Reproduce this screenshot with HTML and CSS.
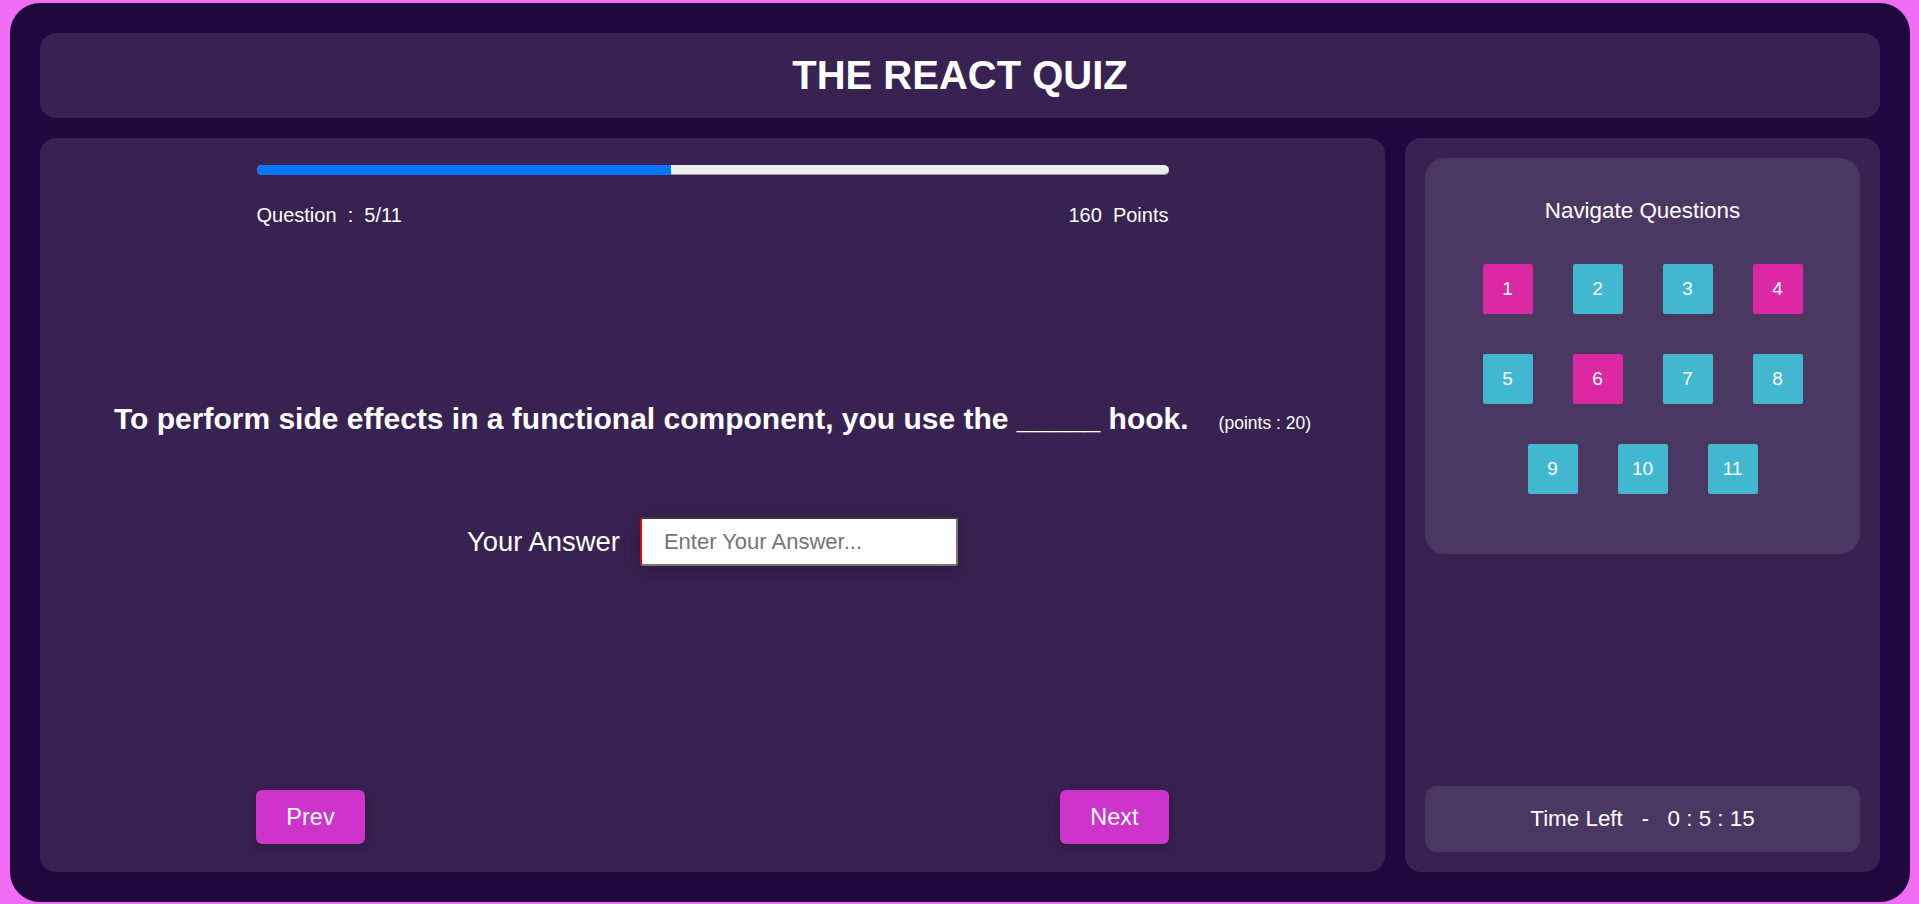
FILE: index.html
```html
<!DOCTYPE html>
<html lang="en">
<head>
<meta charset="utf-8">
<title>The React Quiz</title>
<link rel="stylesheet" href="styles.css">
</head>
<body>
<div class="app">
  <header class="header">
    <h1 class="title">THE REACT QUIZ</h1>
  </header>
  <div class="content">
    <main class="main">
      <div class="progress"><div class="progress-value" style="width: 45.45%"></div></div>
      <div class="info">
        <span>Question &nbsp;:&nbsp; 5/11</span>
        <span>160 &nbsp;Points</span>
      </div>
      <h2 class="question">To perform side effects in a functional component, you use the _____ hook.<span class="qpoints">(points : 20)</span></h2>
      <div class="answer">
        <label class="answer-label" for="ans">Your Answer</label>
        <input class="answer-input" id="ans" type="text" placeholder="Enter Your Answer...">
      </div>
      <div class="footer">
        <button class="btn">Prev</button>
        <button class="btn">Next</button>
      </div>
    </main>
    <aside class="sidebar">
      <div class="nav-box">
        <div class="nav-title">Navigate Questions</div>
        <div class="nav-grid">
          <button class="qbtn answered">1</button>
          <button class="qbtn">2</button>
          <button class="qbtn">3</button>
          <button class="qbtn answered">4</button>
          <button class="qbtn">5</button>
          <button class="qbtn answered">6</button>
          <button class="qbtn">7</button>
          <button class="qbtn">8</button>
          <button class="qbtn">9</button>
          <button class="qbtn">10</button>
          <button class="qbtn">11</button>
        </div>
      </div>
      <div class="timer">Time Left &nbsp; - &nbsp; 0 : 5 : 15</div>
    </aside>
  </div>
</div>
</body>
</html>
```
FILE: styles.css
```css
* { box-sizing: border-box; }

html, body { height: 100%; }

body {
  margin: 0;
  padding: 3px 9px 2px 10px;
  background: #f16cf5;
  font-family: "Liberation Sans", Arial, sans-serif;
  color: #ffffff;
}

.app {
  height: 899px;
  background: #20073e;
  border-radius: 30px;
  padding: 30px;
  display: flex;
  flex-direction: column;
  gap: 20px;
}

.header {
  height: 85px;
  background: #382251;
  border-radius: 16px;
  display: flex;
  align-items: center;
  justify-content: center;
}

.title {
  margin: 0;
  font-size: 40px;
  font-weight: bold;
  color: #ffffff;
}

.content {
  flex: 1;
  display: flex;
  gap: 20px;
  min-height: 0;
}

.main {
  flex: 1;
  background: #382251;
  border-radius: 16px;
  padding: 27px 0 28px;
  display: flex;
  flex-direction: column;
  align-items: center;
}

.progress {
  width: 912px;
  height: 10px;
  background: #eeeeee;
  border-radius: 5px;
  overflow: hidden;
  box-shadow: inset 0 -1px 0 #9a9a9a;
}

.progress-value {
  height: 100%;
  background: #0577ff;
}

.info {
  width: 912px;
  margin-top: 29px;
  display: flex;
  justify-content: space-between;
  font-size: 20px;
  line-height: 23px;
}

.question {
  margin: 175px 0 0;
  font-size: 30px;
  font-weight: bold;
  line-height: 34px;
  text-align: center;
}

.qpoints {
  margin-left: 30px;
  font-size: 17.5px;
  font-weight: normal;
}

.answer {
  margin-top: 77px;
  display: flex;
  align-items: center;
  gap: 20px;
}

.answer-label {
  font-size: 27.4px;
}

.answer-input {
  width: 318px;
  height: 49px;
  padding: 0 10px 0 22px;
  font-family: "Liberation Sans", Arial, sans-serif;
  font-size: 22px;
  color: #222;
  background: #ffffff;
  border-top: 2px solid #3a3a3a;
  border-right: 2px solid #767676;
  border-bottom: 2px solid #767676;
  border-left: 2px solid #ee0000;
  border-radius: 3px;
  box-shadow: 0 4px 18px rgba(0, 0, 0, 0.28);
  outline: none;
}

.answer-input::placeholder {
  color: #757575;
}

.footer {
  margin-top: auto;
  width: 913px;
  display: flex;
  justify-content: space-between;
}

.btn {
  width: 109px;
  height: 54px;
  border: none;
  border-radius: 6px;
  background: #ce33cc;
  color: #ffffff;
  font-family: "Liberation Sans", Arial, sans-serif;
  font-size: 23.5px;
  box-shadow: 0 4px 12px rgba(0, 0, 0, 0.25);
  cursor: pointer;
}

.sidebar {
  width: 475px;
  background: #382251;
  border-radius: 16px;
  padding: 20px;
  display: flex;
  flex-direction: column;
  justify-content: space-between;
}

.nav-box {
  background: #4a3862;
  border-radius: 20px;
  padding: 40px 0 60px;
  display: flex;
  flex-direction: column;
  align-items: center;
}

.nav-title {
  font-size: 22.4px;
  line-height: 26px;
}

.nav-grid {
  margin-top: 40px;
  width: 320px;
  display: flex;
  flex-wrap: wrap;
  justify-content: center;
  gap: 40px;
}

.qbtn {
  width: 50px;
  height: 50px;
  border: none;
  border-radius: 2px;
  background: #41b8cf;
  color: #ffffff;
  font-family: "Liberation Sans", Arial, sans-serif;
  font-size: 19px;
  padding: 0;
  cursor: pointer;
}

.qbtn.answered {
  background: #dc29a3;
}

.timer {
  height: 66px;
  background: #4a3862;
  border-radius: 12px;
  display: flex;
  align-items: center;
  justify-content: center;
  font-size: 22.4px;
  white-space: pre;
}
```
